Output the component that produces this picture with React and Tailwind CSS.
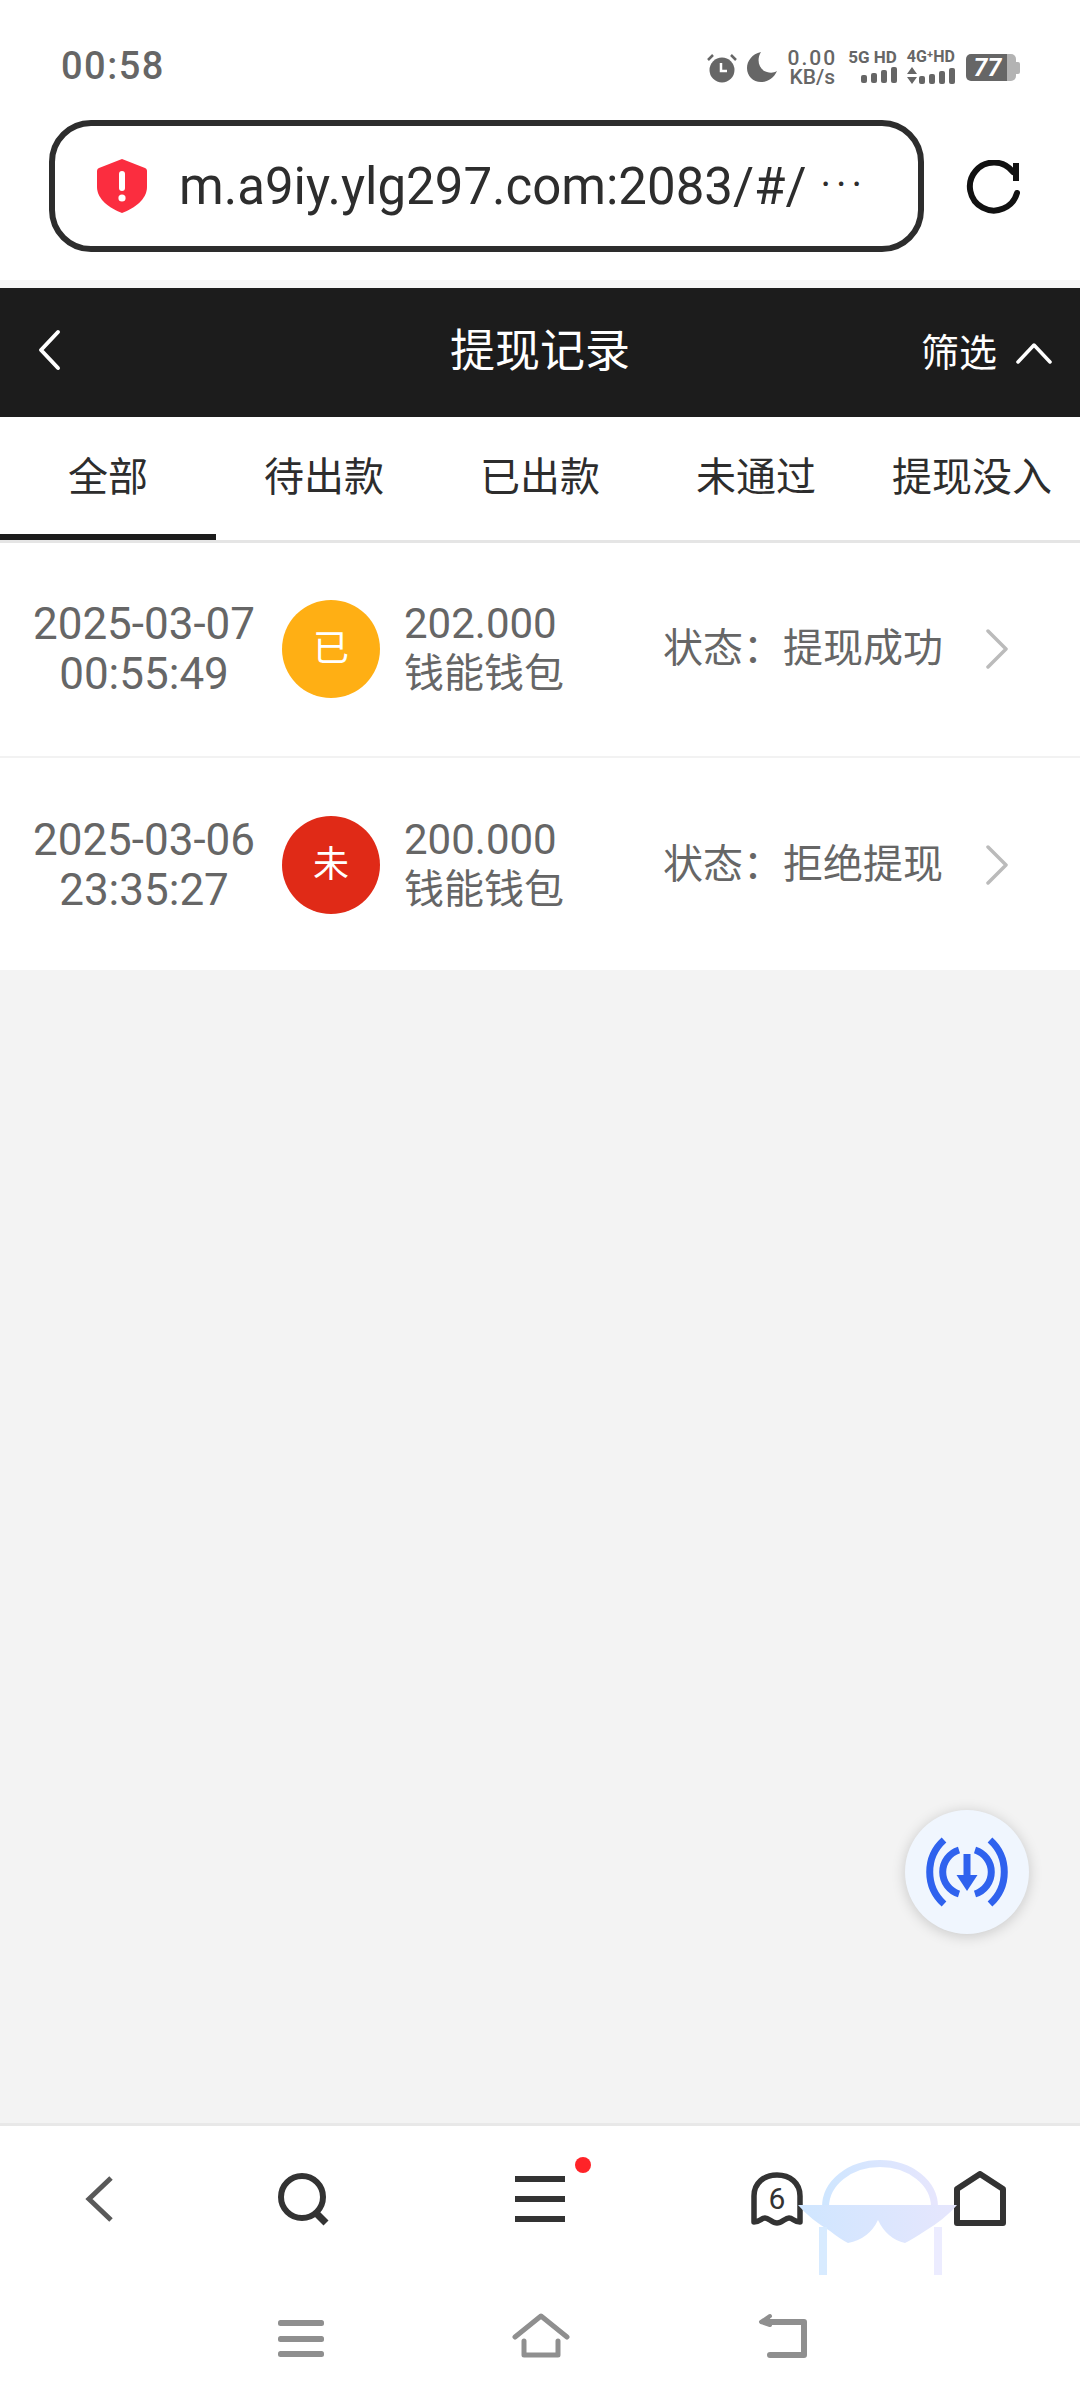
const records = [
  { date: "2025-03-07", time: "00:55:49", mark: "已", markBg: "bg-[#ffaf14]", amount: "202.000", status: "提现成功", rowClass: "h-[215px] border-b-[2px] border-[#f2f2f2] pb-[2px]" },
  { date: "2025-03-06", time: "23:35:27", mark: "未", markBg: "bg-[#e02a17]", amount: "200.000", status: "拒绝提现", rowClass: "h-[212px] pt-[1px]" },
];

const tabs = ["全部", "待出款", "已出款", "未通过", "提现没入"];

function Bars() {
  return (
    <div className="flex items-end gap-[4px]">
      <span className="w-[6px] h-[8px] rounded-[2px] bg-[#666]" />
      <span className="w-[6px] h-[10px] rounded-[2px] bg-[#666]" />
      <span className="w-[6px] h-[13px] rounded-[2px] bg-[#666]" />
      <span className="w-[6px] h-[16px] rounded-[2px] bg-[#666]" />
    </div>
  );
}

function StatusBar() {
  return (
    <div className="h-[120px] flex justify-between pl-[61px] pr-[60px] pt-[44px] text-[#666]">
      <span className="text-[38px] leading-[44px] font-medium tracking-[1.5px]">00:58</span>
      <div className="flex items-start gap-[10px] pt-[9px]">
        <svg width="30" height="30" viewBox="0 0 30 30" fill="#666">
          <circle cx="15" cy="17" r="12.5" />
          <path d="M14 10v8h6" fill="none" stroke="#fff" strokeWidth="2.5" />
          <path d="M1 7l5-5M29 7l-5-5" fill="none" stroke="#666" strokeWidth="2.5" />
        </svg>
        <svg className="-mt-[1px]" width="30" height="30" viewBox="0 0 30 30" fill="#666">
          <path d="M14 0C5 2 0 9 0 16c0 8 6 14 14 14 7 0 13-4 16-11-3 2-7 2-10 1C12 18 9 8 14 0z" />
        </svg>
        <div className="flex flex-col items-center font-medium -mt-[5px]">
          <span className="text-[21px] leading-[20px] tracking-[2px]">0.00</span>
          <span className="text-[21px] leading-[18px]">KB/s</span>
        </div>
        <div className="flex flex-col items-end -mt-[5px] ml-[1px] gap-[1px]">
          <span className="text-[17px] leading-[18px] font-bold whitespace-nowrap">5G HD</span>
          <Bars />
        </div>
        <div className="flex flex-col items-end -mt-[5px] gap-[1px]">
          <span className="text-[16px] leading-[18px] font-bold whitespace-nowrap">4G⁺HD</span>
          <div className="flex items-end gap-[2px]">
            <svg width="10" height="17" viewBox="0 0 10 17" fill="#666">
              <path d="M5 0l5 7H0zM5 17l5-7H0z" />
            </svg>
            <Bars />
          </div>
        </div>
        <div className="flex items-center mt-[1px] ml-[1px]">
          <div className="w-[50px] h-[27px] rounded-[5px] bg-[linear-gradient(90deg,#666_0,#666_82%,#b3b3b3_82%)] flex items-center justify-center pr-[7px] text-white text-[25px] leading-none font-bold italic">
            77
          </div>
          <span className="w-[4px] h-[12px] rounded-r-[2px] bg-[#b3b3b3]" />
        </div>
      </div>
    </div>
  );
}

function UrlBar() {
  return (
    <div className="h-[160px] pb-[28px] pl-[49px] pr-[60px] flex items-start justify-between">
      <div className="w-[875px] h-[132px] border-[6px] border-[#2d2d2d] rounded-[42px] flex items-center pl-[42px] gap-[32px]">
        <svg width="50" height="54" viewBox="0 0 50 54">
          <path d="M25 0l23 9c2 1 2 2 2 4v15c0 12-12 21-25 26C12 49 0 40 0 28V13c0-2 0-3 2-4z" fill="#fb2d3f" />
          <rect x="22" y="12" width="6" height="20" rx="3" fill="#fff" />
          <circle cx="25" cy="39" r="3.6" fill="#fff" />
        </svg>
        <span className="text-[51px] leading-none text-[#2d2d2d] whitespace-nowrap">
          m.a9iy.ylg297.com:2083/#/
          <span className="relative -top-[6px] ml-[14px] text-[40px] tracking-[5px]">···</span>
        </span>
      </div>
      <svg className="mt-[40px]" width="54" height="54" viewBox="0 0 54 54" fill="none" stroke="#111" strokeWidth="6">
        <path d="M51 33A24 24 0 1 1 47 12" strokeLinecap="round" />
        <rect x="47" y="3" width="6" height="18" fill="#111" stroke="none" />
      </svg>
    </div>
  );
}

function Header() {
  return (
    <>
      <div className="h-[8px] bg-[#f5f5f5]" />
      <div className="h-[129px] bg-[#1c1c1c] grid grid-cols-[1fr_auto_1fr] items-center pl-[37px] pr-[28px] text-white">
        <svg className="-mt-[6px]" width="24" height="42" viewBox="0 0 24 42" fill="none" stroke="#fff" strokeWidth="4" strokeLinecap="round" strokeLinejoin="round">
          <path d="M21 3L4 21l17 18" />
        </svg>
        <span className="text-[45px] leading-none -mt-[2px] -ml-[9px]">提现记录</span>
        <div className="flex items-center justify-end gap-[19px]">
          <span className="text-[38px] leading-none">筛选</span>
          <svg width="36" height="24" viewBox="0 0 36 24" fill="none" stroke="#fff" strokeWidth="3.5" strokeLinecap="round" strokeLinejoin="round">
            <path d="M2 21L18 4l16 17" />
          </svg>
        </div>
      </div>
      <div className="h-[126px] grid grid-cols-5 border-b-[3px] border-[#e5e5e5] bg-white">
        {tabs.map((tab, i) => (
          <div
            key={tab}
            className={`flex items-center justify-center pt-[4px] text-[40px] leading-none whitespace-nowrap text-[#2d2d2d] border-b-[6px] ${
              i === 0 ? "border-[#1c1c1c]" : "border-transparent"
            }`}
          >
            {tab}
          </div>
        ))}
      </div>
    </>
  );
}

function RecordRow({ item }) {
  return (
    <div className={`flex items-center bg-white text-[#666] ${item.rowClass}`}>
      <div className="w-[258px] pl-[30px] text-center text-[44px] leading-[50px] whitespace-nowrap">
        <div>{item.date}</div>
        <div>{item.time}</div>
      </div>
      <div className={`ml-[24px] w-[98px] h-[98px] rounded-full flex items-center justify-center text-white text-[36px] leading-none ${item.markBg}`}>
        {item.mark}
      </div>
      <div className="ml-[24px] w-[259px] text-[40px] leading-[50px]">
        <div className="text-[42px]">{item.amount}</div>
        <div>钱能钱包</div>
      </div>
      <div className="text-[40px] leading-none whitespace-nowrap">状态：{item.status}</div>
      <svg className="ml-[42px]" width="24" height="40" viewBox="0 0 24 40" fill="none" stroke="#bbb" strokeWidth="3.5" strokeLinecap="round" strokeLinejoin="round">
        <path d="M3 2l18 18L3 38" />
      </svg>
    </div>
  );
}

function DownloadFab() {
  return (
    <div className="absolute left-[905px] top-[1810px] w-[124px] h-[124px] rounded-full bg-[#f0f6fe] shadow-[0_2px_14px_rgba(0,0,0,0.18)] flex items-center justify-center">
      <svg width="90" height="90" viewBox="-45 -45 90 90" fill="none" stroke="#2f62ee" strokeWidth="7">
        <path d="M-23 -32A43 43 0 0 0 -23 32" />
        <path d="M23 -32A43 43 0 0 1 23 32" />
        <path d="M-8 -22A23 23 0 0 0 -8 22" />
        <path d="M8 -22A23 23 0 0 1 8 22" />
        <path d="M0 -18V6" />
        <path d="M-10.5 3H10.5L0 19z" fill="#2f62ee" stroke="none" />
      </svg>
    </div>
  );
}

function BottomNav() {
  return (
    <div className="h-[277px] bg-white border-t-[3px] border-[#e8e8e8] relative">
      <div className="h-[150px] relative">
        <div className="absolute inset-0 flex items-center pb-[4px]">
          <svg className="ml-[84px]" width="30" height="48" viewBox="0 0 30 48" fill="none" stroke="#595959" strokeWidth="5">
            <path d="M27 3L5 24l22 21" />
          </svg>
          <svg className="ml-[164px]" width="52" height="54" viewBox="0 0 52 54" fill="none" stroke="#333" strokeWidth="6">
            <circle cx="24" cy="25" r="21" />
            <path d="M38 41l10 10" strokeWidth="7" />
          </svg>
          <svg className="ml-[185px]" width="50" height="46" viewBox="0 0 50 46" fill="#333">
            <rect x="0" y="0" width="50" height="6" />
            <rect x="0" y="20" width="50" height="6" />
            <rect x="0" y="40" width="50" height="6" />
          </svg>
          <div className="ml-[186px] w-[52px] h-[54px] relative flex items-center justify-center">
            <svg className="absolute inset-0" width="52" height="54" viewBox="0 0 52 54" fill="none" stroke="#333" strokeWidth="5.5" strokeLinejoin="round">
              <path d="M3 50V24C3 11 13 3 26 3s23 8 23 21v26c-6 0-7-4-11-4s-7 5-12 5-8-5-12-5-5 4-11 4z" />
            </svg>
            <span className="text-[30px] leading-none text-[#333] -mt-[1px]">6</span>
          </div>
          <svg className="ml-[151px]" width="52" height="56" viewBox="0 0 52 56" fill="none" stroke="#333" strokeWidth="6" strokeLinejoin="round">
            <path d="M3 18L26 3l23 15v34H3z" />
          </svg>
        </div>
        <span className="absolute left-[575px] top-[31px] w-[16px] h-[16px] rounded-full bg-[#ff2328]" />
      </div>
      <div className="flex items-start pt-[37px]">
        <svg className="ml-[278px] mt-[7px]" width="46" height="38" viewBox="0 0 46 38" fill="#8f8f8f">
          <rect x="0" y="0" width="46" height="6" rx="2.5" />
          <rect x="0" y="16" width="46" height="6" rx="2.5" />
          <rect x="0" y="31" width="46" height="6" rx="2.5" />
        </svg>
        <svg className="ml-[188px]" width="58" height="46" viewBox="0 0 58 46" fill="none" stroke="#8f8f8f" strokeWidth="5" strokeLinecap="round" strokeLinejoin="round">
          <path d="M3 24L29 3l26 21" />
          <path d="M12 28v14h34V28" />
        </svg>
        <svg className="ml-[188px]" width="50" height="46" viewBox="0 0 50 46" fill="none" stroke="#8f8f8f" strokeWidth="6" strokeLinecap="round" strokeLinejoin="round">
          <path d="M8 9h38v33H12" />
          <path d="M12 3L3 9l9 3" strokeWidth="4" fill="#8f8f8f" />
        </svg>
      </div>
    </div>
  );
}

function GlassesOverlay() {
  return (
    <svg className="absolute left-[795px] top-[2155px]" width="170" height="122" viewBox="0 0 170 122" fill="none">
      <defs>
        <linearGradient id="lens" x1="0" y1="0" x2="1" y2="0">
          <stop offset="0" stopColor="#cfe6ff" />
          <stop offset="1" stopColor="#e6e6fd" />
        </linearGradient>
      </defs>
      <path d="M30.5 52A54.5 43.5 0 0 1 139.5 52" stroke="url(#lens)" strokeWidth="7" />
      <path d="M3 50H162Q150 64 130 76Q118 84 110 88Q92 84 83 65Q74 84 53 88Q45 84 35 76Q15 64 3 50Z" fill="url(#lens)" />
      <rect x="24" y="72" width="8" height="48" fill="#d8ebff" />
      <rect x="139" y="72" width="8" height="48" fill="#ececff" />
    </svg>
  );
}

export default function App() {
  return (
    <div
      className="w-[1080px] h-[2400px] relative overflow-hidden bg-white flex flex-col"
      style={{ fontFamily: 'Roboto, "Noto Sans CJK SC", sans-serif' }}
    >
      <StatusBar />
      <UrlBar />
      <Header />
      {records.map((item) => (
        <RecordRow key={item.date} item={item} />
      ))}
      <div className="flex-1 bg-[#f3f3f3]" />
      <BottomNav />
      <DownloadFab />
      <GlassesOverlay />
    </div>
  );
}
